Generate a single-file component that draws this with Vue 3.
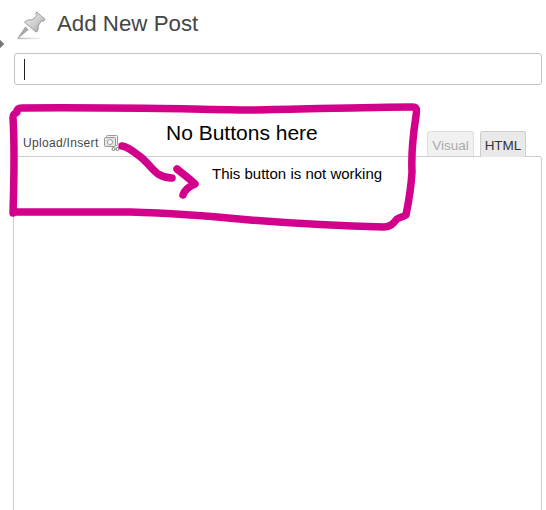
<script setup>
// hand-drawn annotation strokes over the screenshot
const boxPath = 'M13 213 C14 180 15 150 13 118 C13 113 15 114 17 112 C17 109 18 108 22 108 C100 107 180 109 250 110 C310 109 370 107 412 107 C417 107 417 109 416 116 C413 135 411 150 412 172 C411 190 408 205 406 215 C403 217 400 217 397 219 C393 224 390 227 384 227 C340 226 300 224 250 220 C210 216 170 213 130 212 C90 212 50 212 13 212'
const arrowPath = 'M122 146 C128 147 133 151 138 155 C146 160 150 168 158 174 C163 177 167 178 172 178'
const headPath = 'M177 169 C183 174 190 179 195 184 C190 186 185 189 183 195'
</script>

<template>
  <div class="page">
    <span class="menu-dot"></span>

    <header class="heading">
      <svg class="pin" width="32" height="32" viewBox="0 0 34 34">
        <defs>
          <linearGradient id="pinBody" x1="0" y1="0" x2="1" y2="1">
            <stop offset="0" stop-color="#f4f4f4" />
            <stop offset="0.6" stop-color="#c9c9c9" />
            <stop offset="1" stop-color="#8e8e8e" />
          </linearGradient>
          <linearGradient id="pinShadow" x1="0" y1="0" x2="1" y2="0">
            <stop offset="0" stop-color="#b5b5b5" />
            <stop offset="1" stop-color="#f2f2f2" />
          </linearGradient>
        </defs>
        <rect x="2" y="29.5" width="24" height="1.5" fill="url(#pinShadow)" />
        <path d="M2 30 L10 18 L13 21 Z" fill="#a8a8a8" stroke="#8a8a8a" stroke-width=".6" />
        <path d="M22 2 L31 10 L29 12 L27 11.5 L23.5 17 C24 20 23 22 21.5 23.5 L9 13 C11 11 14 10 17 10.5 L22 6 L21 4 Z" fill="url(#pinBody)" stroke="#8f8f8f" stroke-width=".9" stroke-linejoin="round" />
      </svg>
      <h1 class="title">Add New Post</h1>
    </header>

    <div class="title-input"><span class="caret"></span></div>

    <div class="toolbar">
      <div class="media">
        <span class="media-label">Upload/Insert</span>
        <svg class="media-icon" width="16" height="16" viewBox="0 0 16 16" fill="none" stroke="#999">
          <rect x="2.5" y=".5" width="11" height="10" rx="1" fill="#f1f1f1" />
          <rect x=".5" y="2.5" width="11" height="9" rx="1" fill="#e4e4e4" />
          <circle cx="6" cy="7" r="2.5" fill="#fff" />
          <circle cx="9.5" cy="14" r="1.5" stroke="#777" />
          <circle cx="13.5" cy="14" r="1.5" stroke="#777" />
        </svg>
      </div>
      <div class="tabs">
        <span class="tab">Visual</span>
        <span class="tab active">HTML</span>
      </div>
    </div>

    <div class="editor"></div>

    <!-- annotations drawn on top of the page -->
    <svg class="scribble" width="546" height="510" viewBox="0 0 546 510" fill="none" stroke="#d3008c" stroke-width="7.5" stroke-linecap="round" stroke-linejoin="round">
      <path :d="boxPath" />
      <path :d="arrowPath" />
      <path :d="headPath" />
    </svg>
    <span class="note note-big">No Buttons here</span>
    <span class="note note-small">This button is not working</span>
  </div>
</template>

<style scoped>
.page {
  position: relative;
  width: 546px;
  height: 510px;
  overflow: hidden;
  background: #fff;
  font-family: "Liberation Sans", Arial, sans-serif;
  box-sizing: border-box;
  padding: 0 4px 0 13px;
}

.menu-dot {
  position: absolute;
  left: -3px;
  top: 41px;
  width: 6px;
  height: 6px;
  background: #777;
  transform: rotate(45deg);
}

.heading {
  display: flex;
  align-items: center;
  height: 53px;
  padding-left: 3px;
  gap: 9px;
}

.pin {
  flex: none;
  margin-top: -2px;
}

.title {
  margin: 0 0 6px;
  font-size: 22.3px;
  font-weight: 400;
  line-height: 30px;
  color: #464646;
}

.title-input {
  height: 30px;
  margin-left: 1px;
  border: 1px solid #c4c4c4;
  border-radius: 3px;
  display: flex;
  align-items: center;
  padding-left: 9px;
}

.caret {
  width: 1px;
  height: 21px;
  background: #222;
}

.toolbar {
  display: flex;
  justify-content: space-between;
  align-items: flex-end;
  height: 71px;
  padding: 0 16px 0 10px;
}

.media {
  display: flex;
  align-items: center;
  gap: 5px;
  padding-bottom: 5px;
}

.media-label {
  font-size: 12px;
  letter-spacing: .32px;
  color: #464646;
}

.media-icon {
  display: block;
}

.tabs {
  display: flex;
  gap: 6px;
}

.tab {
  width: 47px;
  height: 25px;
  box-sizing: border-box;
  border: 1px solid #dfdfdf;
  border-bottom: 0;
  border-radius: 3px 3px 0 0;
  background: #f1f1f1;
  color: #aaa;
  font-size: 13.5px;
  line-height: 27px;
  text-align: center;
}

.tab.active {
  width: 46px;
  border-color: #ccc;
  background: #e9e9e9;
  color: #333;
  height: 26px;
  margin-bottom: -1px;
  position: relative;
}

.editor {
  height: 400px;
  border: 1px solid #ccc;
  border-radius: 3px 3px 0 0;
  background: #fff;
}

.scribble {
  position: absolute;
  left: 0;
  top: 0;
  pointer-events: none;
}

.note {
  position: absolute;
  color: #000;
  white-space: nowrap;
}

.note-big {
  left: 166px;
  top: 121px;
  font-size: 21px;
  line-height: 24px;
}

.note-small {
  left: 212px;
  top: 165px;
  font-size: 15px;
  line-height: 18px;
}
</style>

<style>
html, body {
  margin: 0;
  overflow: hidden;
}
</style>
